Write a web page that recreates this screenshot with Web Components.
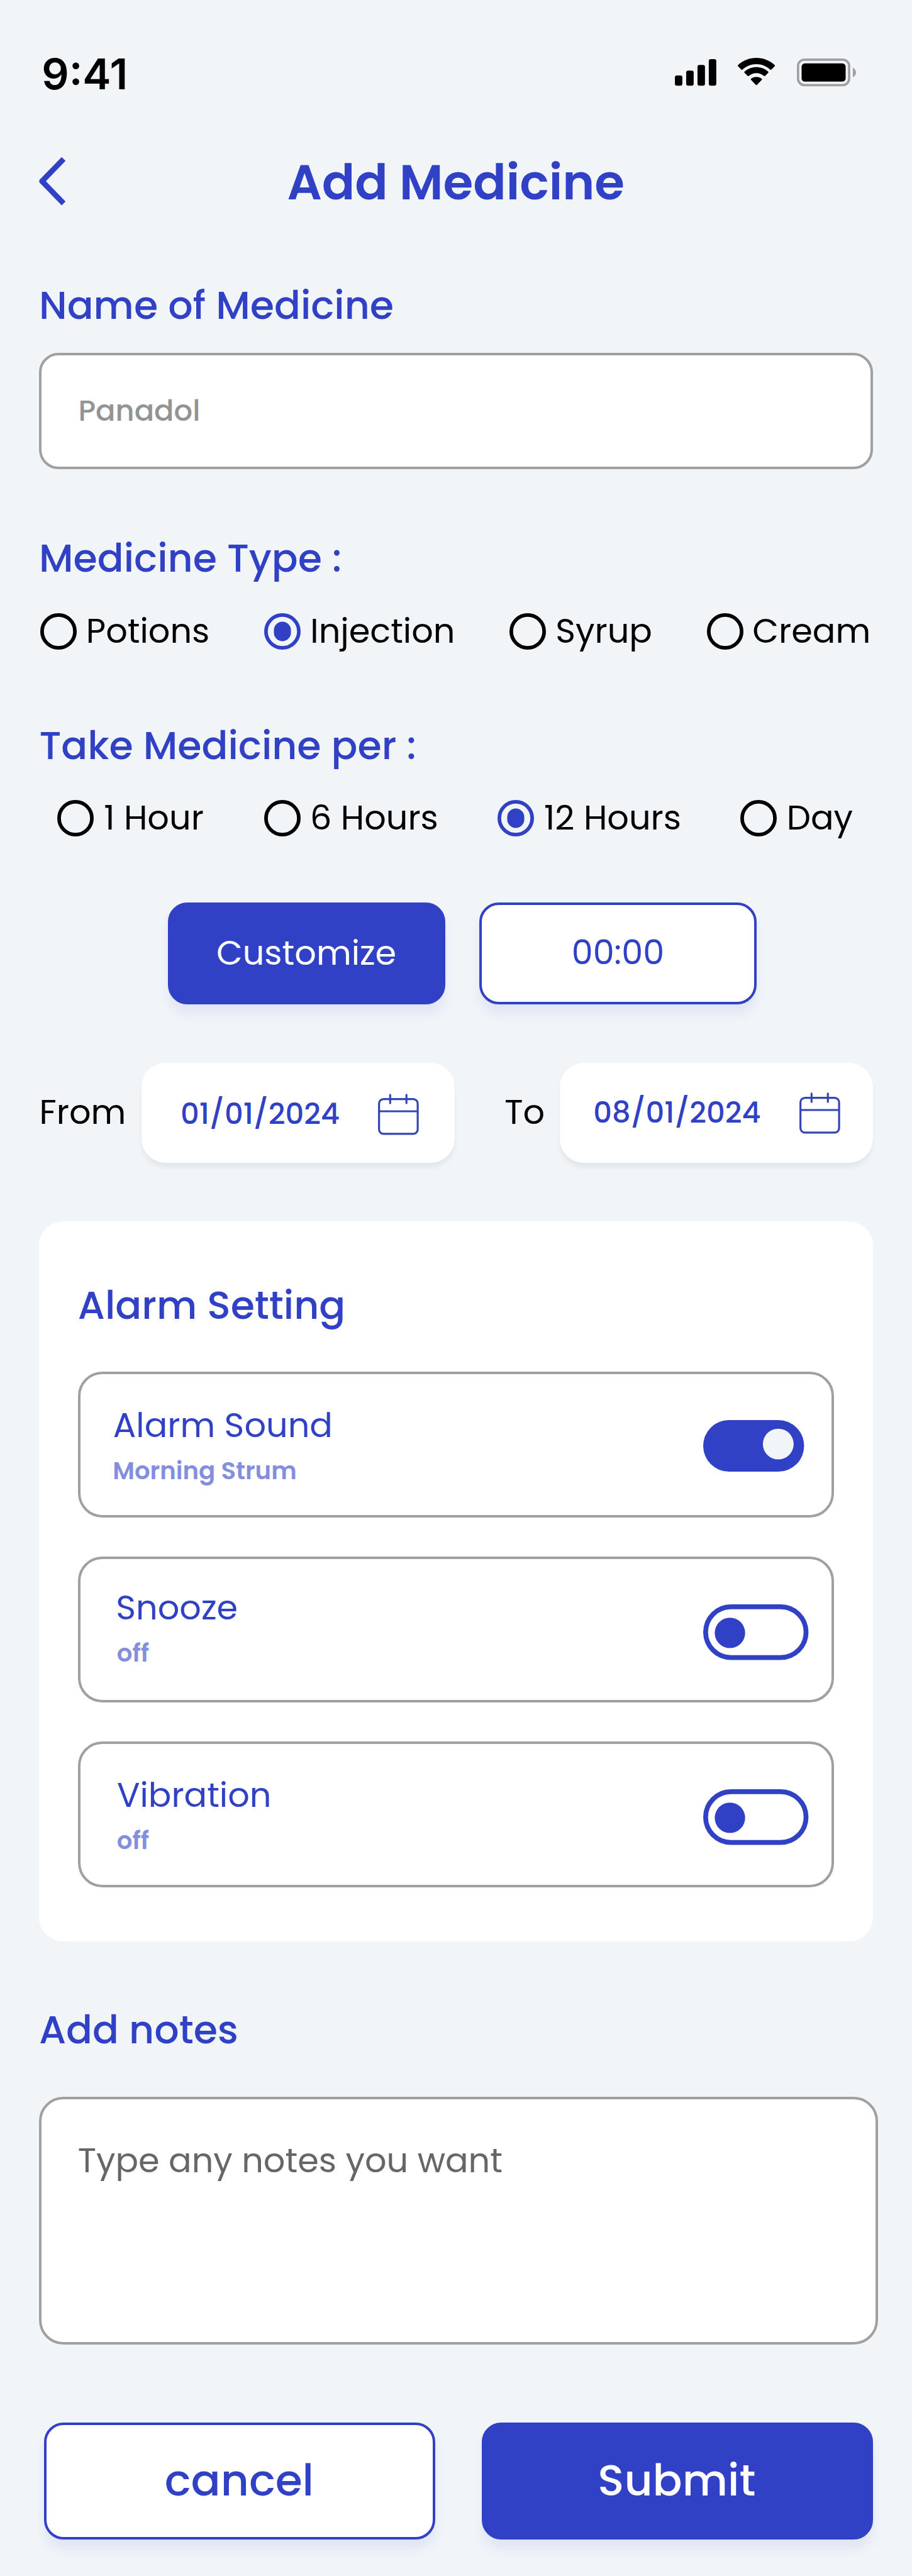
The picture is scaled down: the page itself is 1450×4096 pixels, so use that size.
<!DOCTYPE html>
<html lang="en">
<head>
<meta charset="utf-8">
<title>Add Medicine</title>
<style>
  html { --u: .966667px; --blue: #3041c6; --line: #a0a0a1; --bg: #f1f5f8; background: #f1f5f8; }
  body { margin: 0; font-family: Poppins, Inter, "Open Sans", sans-serif; color: #000; }
</style>
</head>
<body>
<medicine-page></medicine-page>
<script>
const u = n => `calc(${n} * var(--u))`;
const base = `<style>:host{display:block;box-sizing:border-box} *{box-sizing:border-box} svg{display:block;flex:none}</style>`;
const svg = (w, h, body, extra = '') => `<svg viewBox="0 0 ${w} ${h}" style="width:${u(w)};height:${u(h)};${extra}">${body}</svg>`;

function define(name, render) {
  customElements.define(name, class extends HTMLElement {
    connectedCallback() {
      if (this.shadowRoot) return;
      const root = this.attachShadow({ mode: 'open' });
      root.innerHTML = base + render(k => this.getAttribute(k) ?? '');
    }
  });
}

/* One line of text, flush with its first letter's edge:
   w = width, s = font size, b = baseline from the top, wt = weight, face = another family */
const pen = document.createElement('canvas').getContext('2d');
customElements.define('ink-text', class extends HTMLElement {
  connectedCallback() {
    if (this.shadowRoot) return;
    const a = k => parseFloat(this.getAttribute(k));
    const s = a('s'), w = a('w'), wt = this.getAttribute('wt') || 400, face = this.getAttribute('face') || 'Poppins';
    const drop = face === 'Inter' ? .3638 : .34;
    const lh = u(2 * (a('b') - drop * s));
    pen.font = `${wt} 100px ${face}, Inter, "Open Sans", sans-serif`;
    const bearing = -pen.measureText(this.textContent[0]).actualBoundingBoxLeft * s / 100;
    this.attachShadow({ mode: 'open' }).innerHTML = `<style>
      :host{display:block;box-sizing:border-box;flex:none;width:${u(w)};height:${lh};line-height:${lh};
        font-family:${face},Inter,"Open Sans",sans-serif;font-size:${u(s)};font-weight:${wt};white-space:nowrap;text-indent:${u(-bearing)}}
      </style><slot></slot>`;
  }
});
const text = (t, w, s, b, wt = 400, face = 'Poppins') =>
  `<ink-text w="${w}" s="${s}" b="${b}" wt="${wt}" face="${face}">${t}</ink-text>`;

define('status-bar', () => `<style>
  :host{display:flex;justify-content:space-between;height:${u(241)};padding:0 ${u(91)} 0 ${u(72)}}
  .icons{display:flex;align-items:flex-start;padding-top:${u(95)}}</style>
  ${text('9:41', 134, 70.3, 147.6, 600, 'Inter')}
  <div class="icons">
  ${svg(68, 48, `<rect x="0" y="29" width="12.3" height="16.7" rx="3.4"/><rect x="18.6" y="21" width="12.3" height="24.7" rx="3.4"/><rect x="37.2" y="11.6" width="12.3" height="34.1" rx="3.4"/><rect x="55.8" y="2" width="12.3" height="43.7" rx="3.4"/>`, `margin-right:${u(35.6)}`)}
  ${svg(62, 48, `<path d="M30.600 10.300c8.500 0 16.600 3.300 22.800 9.200.5.4 1.200.4 1.700 0l5.700-5.700c.5-.5.5-1.300 0-1.800-16.900-15.900-43.600-15.900-60.500 0-.5.5-.5 1.300 0 1.800l5.700 5.700c.5.4 1.200.4 1.700 0C14 13.600 22.200 10.300 30.600 10.300z"/><path d="M30.600 25c4.700 0 9.200 1.700 12.600 4.800.5.4 1.200.4 1.700 0l5.200-5.200c.5-.5.5-1.300 0-1.800-11-10-28-10-39 0-.5.5-.5 1.300 0 1.800l5.200 5.200c.5.4 1.200.4 1.700 0C21.400 26.700 26 25 30.600 25z"/><path d="M39.500 36.200c.5-.5.5-1.200 0-1.700-5.100-4.300-12.600-4.300-17.700 0-.5.5-.5 1.200 0 1.700l8 8.300c.4.5 1.200.5 1.700 0z"/>`, `margin-right:${u(35.4)}`)}
  ${svg(98, 48, `<rect x="1.900" y="2.900" width="84" height="42" rx="10.500" fill="none" stroke="#a0a0a2" stroke-width="3.800"/><rect x="7.700" y="9" width="72.500" height="30" rx="5.500"/><path d="M92 16c3.400 1.600 5.200 4.600 5.200 8s-1.800 6.500-5.200 8z" fill="#a0a0a2"/>`)}
  </div>`);

define('nav-bar', () => `<style>
  :host{display:grid;grid-template-columns:1fr auto 1fr;height:${u(116)};padding:0 ${u(64)};color:var(--blue)}</style>
  ${svg(46, 84, `<path d="M40.500 3.900 5 40.500 40.500 77.100" fill="none" stroke="#3041c6" stroke-width="9" stroke-linejoin="round"/>`, `margin-top:${u(16.500)}`)}
  ${text('Add Medicine', 552.5, 80, 86.6, 600)}<span></span>`);

define('section-title', a => `<style>:host{height:${u(90)};padding-left:${u(a('x'))};color:var(--blue)}</style>
  ${text(a('label'), a('w'), 64, 68, 500)}`);

define('text-box', a => `<style>:host{height:${u(a('h'))};width:${u(a('w'))};background:#fff;border:4px solid var(--line);
  border-radius:${u(a('r'))};padding-left:${u(a('x'))};color:${a('color')}}</style>
  ${text(a('label'), a('tw'), a('s'), a('b'), a('wt'))}`);

define('radio-option', a => {
  const on = a('on') === 'yes', c = on ? '#3041c6' : '#000';
  return `<style>:host{display:flex;gap:${u(a('gap'))};height:${u(60)}}</style>
  ${svg(60, 60, `<circle cx="30" cy="30" r="27" fill="none" stroke="${c}" stroke-width="6"/>${on ? '<rect x="16" y="14" width="28" height="32" rx="14" fill="#3041c6"/>' : ''}`)}
  ${text(a('label'), a('w'), 56, 48.2)}`;
});
define('radio-group', a => `<style>:host{display:grid;grid-template-columns:${a('cols').split(' ').map(u).join(' ')} auto;padding-left:${u(a('x'))};height:${u(60)}}</style><slot></slot>`);

define('push-button', a => {
  const solid = a('kind') === 'solid';
  return `<style>:host{display:flex;justify-content:center;width:${u(a('w'))};height:${u(a('h'))};border-radius:${u(32)};
  border:4px solid var(--blue);background:${solid ? 'var(--blue)' : '#fff'};color:${solid ? '#fff' : 'var(--blue)'};
  box-shadow:0 ${u(16)} ${u(16)} rgba(48,65,198,.08)}</style>
  ${text(a('label'), a('tw'), a('s'), a('b'), a('wt'))}`;
});

define('date-field', a => `<style>
  :host{display:flex}
  .box{display:flex;width:${u(516)};height:${u(164)};margin-left:${u(a('gap'))};padding-left:${u(a('x'))};background:#fff;border-radius:${u(40)};
    color:var(--blue);box-shadow:0 ${u(8)} ${u(8)} rgba(0,0,0,.055)}</style>
  ${text(a('label'), a('lw'), 56, 100)}
  <div class="box">${text(a('date'), a('dw'), 48, a('b'), 500)}
  ${svg(68, 70, `<g fill="none" stroke="#3445b4" stroke-width="3.300"><rect x="1.700" y="8.900" width="63.600" height="57.200" rx="7.500"/><path d="M2 29H66"/><path d="M20 2V15.600M46.800 2V15.600" stroke-linecap="round"/></g>`, `margin-left:${u(a('ix'))};margin-top:${u(a('iy'))}`)}</div>`);

define('alarm-row', a => {
  const on = a('on') === 'yes';
  return `<style>
  :host{display:flex;justify-content:space-between;height:${u(240)};border:4px solid var(--line);border-radius:${u(40)};
    padding:0 ${u(37)} 0 ${u(a('x'))};color:var(--blue)}
  .copy{display:flex;flex-direction:column;padding-top:${u(a('top'))}}
  .sub{color:#838edd}</style>
  <div class="copy">${text(a('label'), a('w'), 56, 49.6)}<div class="sub">${text(a('sub'), a('sw'), 40, 57.6, 600)}</div></div>
  ${on ? svg(174, 92, `<rect y="1" width="166" height="85" rx="42.500" fill="#3041c6"/><circle cx="123.500" cy="40.500" r="25.300" fill="#f1f5f8"/>`, `margin-top:${u(74.3)}`)
       : svg(174, 92, `<rect x="4" y="4" width="165.200" height="83.500" rx="41.700" fill="none" stroke="#3041c6" stroke-width="8"/><circle cx="44" cy="47" r="25" fill="#3041c6"/>`, `margin-top:${u(74.3)}`)}`;
});

define('alarm-card', () => `<style>
  :host{display:flex;flex-direction:column;gap:${u(64)};height:${u(1184.3)};width:${u(1372)};padding:${u(92)} ${u(64)} 0;background:#fff;border-radius:${u(40)}}
  section-title{margin-bottom:${u(2)}}</style>
  <section-title x="2" w="434.500" label="Alarm Setting"></section-title>
  <alarm-row on="yes" x="55.600" top="53.600" label="Alarm Sound" w="356" sub="Morning Strum" sw="298.500"></alarm-row>
  <alarm-row x="61.300" top="49.600" label="Snooze" w="197" sub="off" sw="51.500"></alarm-row>
  <alarm-row x="61.300" top="53.600" label="Vibration" w="250" sub="off" sw="51.500"></alarm-row>`);

define('medicine-page', () => `<style>
  :host{display:flex;flex-direction:column;width:1450px;height:4096px;overflow:hidden;background:var(--bg)}
  main{display:flex;flex-direction:column;padding-left:${u(64)}}
  .row{display:flex}
  .m34{margin-top:${u(34)}} .m46{margin-top:${u(46)}} .m66{margin-top:${u(66)}} .m96{margin-top:${u(96.2)}}
  .m99{margin-top:${u(99.100)}} .m100{margin-top:${u(100.100)}} .m108{margin-top:${u(108.200)}} .m112{margin-top:${u(112)}} .m128{margin-top:${u(128.100)}}
  </style>
  <status-bar></status-bar><nav-bar></nav-bar>
  <main>
  <section-title class="m99" x="4.700" w="578.500" label="Name of Medicine"></section-title>
  <text-box class="m34" w="1372" h="192" r="32" x="64" label="Panadol" tw="196" s="48" b="107.700" wt="500" color="#939393"></text-box>
  <section-title class="m100" x="4.700" w="492" label="Medicine Type :"></section-title>
  <radio-group class="m46" x="2" cols="368.300 403.700 324.300">
    <radio-option label="Potions" w="200" gap="19.500"></radio-option>
    <radio-option on="yes" label="Injection" w="230.500" gap="20"></radio-option>
    <radio-option label="Syrup" w="155" gap="18.500"></radio-option>
    <radio-option label="Cream" w="191" gap="17.500"></radio-option>
  </radio-group>
  <section-title class="m112" x="2.500" w="615" label="Take Medicine per :"></section-title>
  <radio-group class="m46" x="30" cols="340.300 383.700 399.800">
    <radio-option label="1 Hour" w="160" gap="18.500"></radio-option>
    <radio-option label="6 Hours" w="205" gap="19.500"></radio-option>
    <radio-option on="yes" label="12 Hours" w="221" gap="18.500"></radio-option>
    <radio-option label="Day" w="104.500" gap="20"></radio-option>
  </radio-group>
  <div class="row m108" style="padding-left:${u(212.500)};gap:${u(56)}">
    <push-button kind="solid" w="456" h="168" label="Customize" tw="293" s="56" b="98" wt="400"></push-button>
    <push-button w="456" h="168" label="00:00" tw="146.300" s="56" b="97.500" wt="400"></push-button>
  </div>
  <div class="row m96" style="padding-left:${u(4.500)};gap:${u(83.300)}">
    <date-field label="From" lw="137.200" gap="26.600" x="67.600" date="01/01/2024" dw="257.300" b="99.700" ix="64.800" iy="50"></date-field>
    <date-field label="To" lw="62.200" gap="26.600" x="58.400" date="08/01/2024" dw="273.600" b="98" ix="63" iy="48"></date-field>
  </div>
  <alarm-card class="m96"></alarm-card>
  <section-title class="m100" x="2" w="324.300" label="Add notes"></section-title>
  <text-box class="m66" w="1380" h="408" r="40" x="61.500" label="Type any notes you want" tw="694.600" s="56" b="120" wt="400" color="#666"></text-box>
  <div class="row m128" style="padding-left:${u(8)};gap:${u(76)}">
    <push-button w="644" h="192" label="cancel" tw="242" s="72" b="115.700" wt="500"></push-button>
    <push-button kind="solid" w="644" h="192" label="Submit" tw="254.500" s="72" b="115.700" wt="500"></push-button>
  </div>
  </main>`);
</script>
</body>
</html>
